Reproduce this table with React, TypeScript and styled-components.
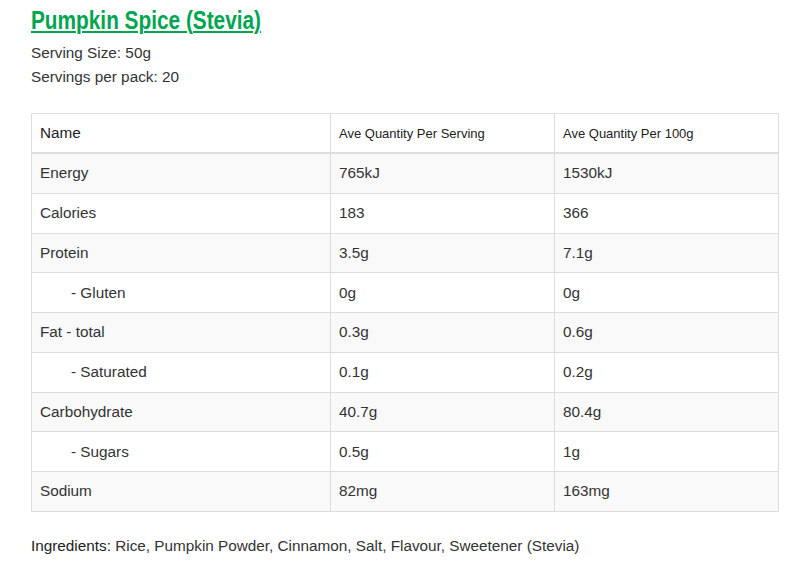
import React from "react";
import styled, { createGlobalStyle } from "styled-components";

const Global = createGlobalStyle`
  html, body { margin: 0; padding: 0; background: #fff; }
  body { font-family: "Liberation Sans", Arial, sans-serif; color: #333; }
`;

const Page = styled.div`
  padding: 6px 22px 0 31px;
  width: 747px;
`;

const Title = styled.h2`
  margin: 0;
  height: 28px;
  font-family: "Liberation Sans", Arial, sans-serif;
  font-weight: 700;
  font-size: 26px;
  line-height: 28px;
  color: #00a54f;
  white-space: nowrap;
`;

const TitleText = styled.span`
  display: inline-block;
  transform: scaleX(0.8);
  transform-origin: left center;
  text-decoration: underline;
  text-decoration-thickness: 2px;
  text-underline-offset: 2px;
`;

const Meta = styled.p`
  margin: 7px 0 0;
  font-size: 15.3px;
  line-height: 24px;
  color: #333;
`;

const Table = styled.table`
  margin-top: 24px;
  width: 747px;
  border-collapse: collapse;
  border: 1px solid #ddd;
  table-layout: fixed;
`;

const Th = styled.th<{ $small?: boolean }>`
  text-align: left;
  font-weight: 400;
  font-size: ${(p) => (p.$small ? "13px" : "15.3px")};
  color: #222;
  padding: 0 8px;
  height: 38px;
  border: 1px solid #ddd;
  border-bottom: 2px solid #ddd;
`;

const Tr = styled.tr<{ $striped?: boolean }>`
  background: ${(p) => (p.$striped ? "#f9f9f9" : "#fff")};
`;

const Td = styled.td<{ $indent?: boolean }>`
  font-size: 15.3px;
  color: #333;
  height: 38.75px;
  padding: 0 8px 0 ${(p) => (p.$indent ? "39px" : "8px")};
  border: 1px solid #ddd;
`;

const Ingredients = styled.p`
  margin: 25px 0 0;
  font-size: 15.3px;
  color: #333;
`;

const Label = styled.span`
  color: #222;
`;

const rows: [string, string, string, boolean][] = [
  ["Energy", "765kJ", "1530kJ", false],
  ["Calories", "183", "366", false],
  ["Protein", "3.5g", "7.1g", false],
  ["- Gluten", "0g", "0g", true],
  ["Fat - total", "0.3g", "0.6g", false],
  ["- Saturated", "0.1g", "0.2g", true],
  ["Carbohydrate", "40.7g", "80.4g", false],
  ["- Sugars", "0.5g", "1g", true],
  ["Sodium", "82mg", "163mg", false],
];

export default function App() {
  return (
    <>
      <Global />
      <Page>
        <Title>
          <TitleText>Pumpkin Spice (Stevia)</TitleText>
        </Title>
        <Meta>
          Serving Size: 50g
          <br />
          Servings per pack: 20
        </Meta>
        <Table>
          <colgroup>
            <col style={{ width: 299 }} />
            <col style={{ width: 224 }} />
            <col style={{ width: 224 }} />
          </colgroup>
          <thead>
            <tr>
              <Th>Name</Th>
              <Th $small>Ave Quantity Per Serving</Th>
              <Th $small>Ave Quantity Per 100g</Th>
            </tr>
          </thead>
          <tbody>
            {rows.map(([n, a, b, indent], i) => (
              <Tr key={n} $striped={i % 2 === 0}>
                <Td $indent={indent}>{n}</Td>
                <Td>{a}</Td>
                <Td>{b}</Td>
              </Tr>
            ))}
          </tbody>
        </Table>
        <Ingredients>
          <Label>Ingredients:</Label> Rice, Pumpkin Powder, Cinnamon, Salt, Flavour, Sweetener (Stevia)
        </Ingredients>
      </Page>
    </>
  );
}
